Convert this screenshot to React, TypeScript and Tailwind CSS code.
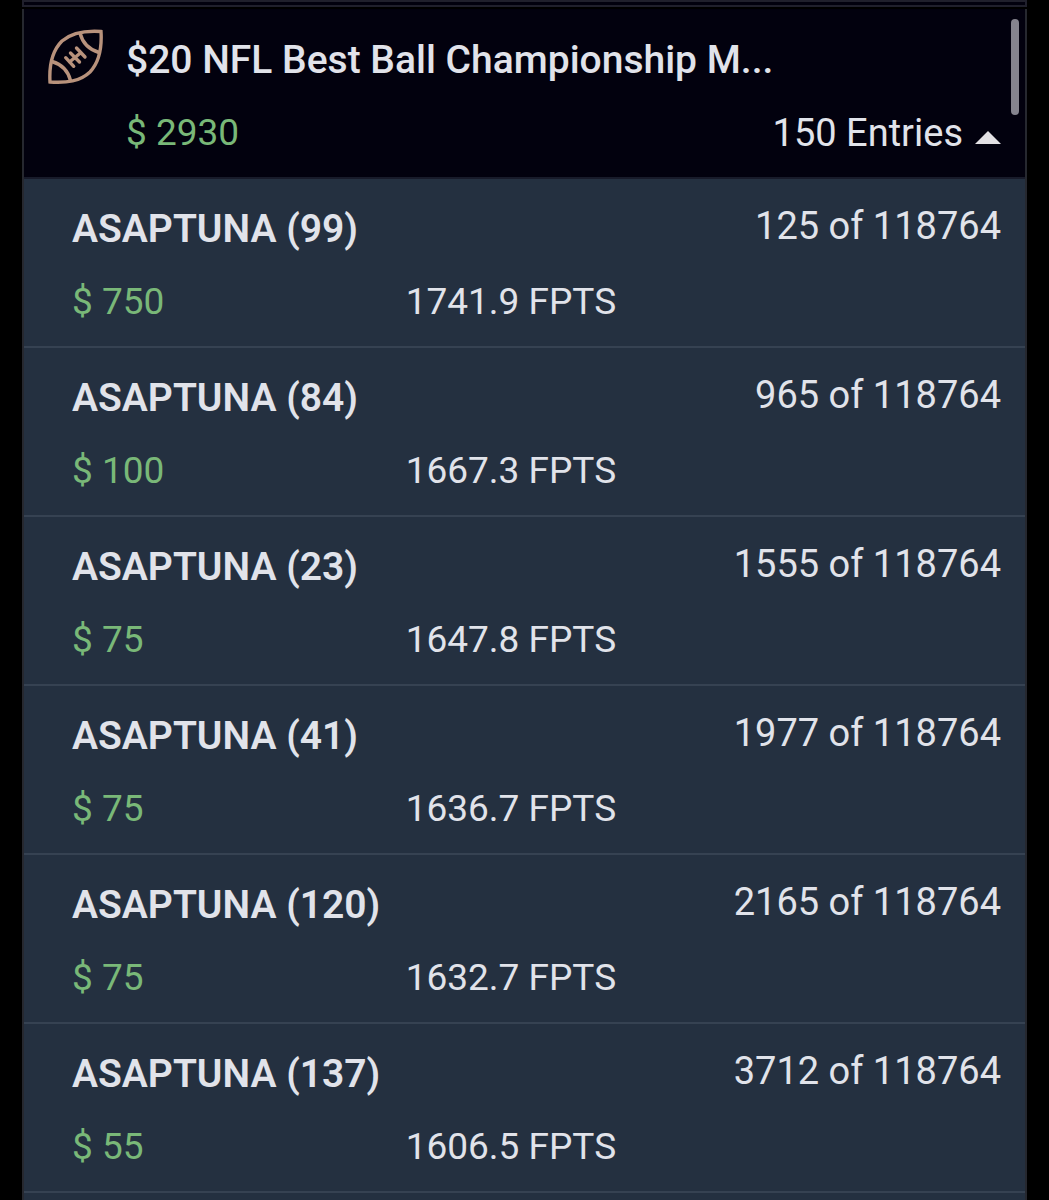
import { useState } from "react";

const CONTEST = {
  title: "$20 NFL Best Ball Championship M...",
  winnings: 2930,
  entries: 150,
  field: 118764,
};

const ENTRIES = [
  { name: "ASAPTUNA (99)", rank: 125, prize: 750, points: 1741.9 },
  { name: "ASAPTUNA (84)", rank: 965, prize: 100, points: 1667.3 },
  { name: "ASAPTUNA (23)", rank: 1555, prize: 75, points: 1647.8 },
  { name: "ASAPTUNA (41)", rank: 1977, prize: 75, points: 1636.7 },
  { name: "ASAPTUNA (120)", rank: 2165, prize: 75, points: 1632.7 },
  { name: "ASAPTUNA (137)", rank: 3712, prize: 55, points: 1606.5 },
];

type Entry = (typeof ENTRIES)[number];

function FootballIcon() {
  return (
    <svg
      viewBox="0 0 56 56"
      className="h-14 w-14 shrink-0"
      fill="none"
      stroke="#b8927c"
      strokeWidth="3.4"
      aria-hidden="true"
    >
      <path d="M2 53C1 36 4 22 14 12C24 3.500 38 1.500 53 2.500C54 19 51.500 33 42 43C32 52.500 19 54 2 53Z" />
      <path d="M32 4C34.500 14 41 20.500 51 23.500" />
      <path d="M4 32.500C14 35.500 20 41.500 22.500 51.500" />
      {/* Laces */}
      <path
        d="M21.500 33L33 23.500M17.700 28.700L25.700 37.300M22.500 24L31.500 33M28.500 19L37 28"
        strokeLinecap="round"
      />
    </svg>
  );
}

function EntryRow({ entry }: { entry: Entry }) {
  return (
    <li className="border-b-2 border-[#364252] pt-[26px] pb-5">
      <div className="flex items-start justify-between pr-6 pl-12">
        <h3 className="text-[39px] leading-[48px] font-semibold">
          {entry.name}
        </h3>
        <p className="text-[38px] leading-[42px]">
          {entry.rank} of {CONTEST.field}
        </p>
      </div>
      <div className="mt-[25px] grid grid-cols-3 leading-[48px]">
        <p className="pl-12 text-[#79b878]">$ {entry.prize}</p>
        <p className="pl-12">{entry.points} FPTS</p>
      </div>
    </li>
  );
}

export default function App() {
  const [open, setOpen] = useState(true);

  return (
    <main className="min-h-screen bg-black px-[22px] font-[Roboto,sans-serif] text-[37px] text-[#e1e3ea]">
      {/* Bottom edge of the previous card */}
      <div className="h-[7px] border-x-2 border-t-2 border-b-2 border-[#20202c] bg-[#02010e]"></div>

      <section className="relative mt-[2px] border-x-2 border-[#26282f]">
        <header className="border-b-2 border-[#181b2a] bg-[#02010e] pt-5 pr-6 pb-5 pl-6">
          <div className="flex items-start gap-[22px]">
            <FootballIcon />
            <div className="min-w-0 flex-1 pt-[7px]">
              <h2 className="text-[39px] leading-[48px] font-medium">
                {CONTEST.title}
              </h2>
              <div className="mt-[25px] flex items-center justify-between leading-[48px]">
                <p className="text-[#79b878]">$ {CONTEST.winnings}</p>
                <button
                  type="button"
                  aria-expanded={open}
                  onClick={() => setOpen(!open)}
                  className="flex items-center gap-3 text-[38px]"
                >
                  {CONTEST.entries} Entries
                  <svg
                    viewBox="0 0 26 13"
                    className={`mt-2 w-[26px] ${open ? "" : "rotate-180"}`}
                    fill="#e3e1e4"
                    aria-hidden="true"
                  >
                    <path d="M13 0L26 13H0Z" />
                  </svg>
                </button>
              </div>
            </div>
          </div>
        </header>

        {/* Scroll thumb over the list */}
        <div className="absolute top-[10px] right-[6px] h-24 w-2 rounded-full bg-[#85848e]"></div>

        {open && (
          <ul className="bg-[#243040]">
            {ENTRIES.map((entry) => (
              <EntryRow key={entry.name} entry={entry} />
            ))}
            <li className="h-5"></li>
          </ul>
        )}
      </section>
    </main>
  );
}
